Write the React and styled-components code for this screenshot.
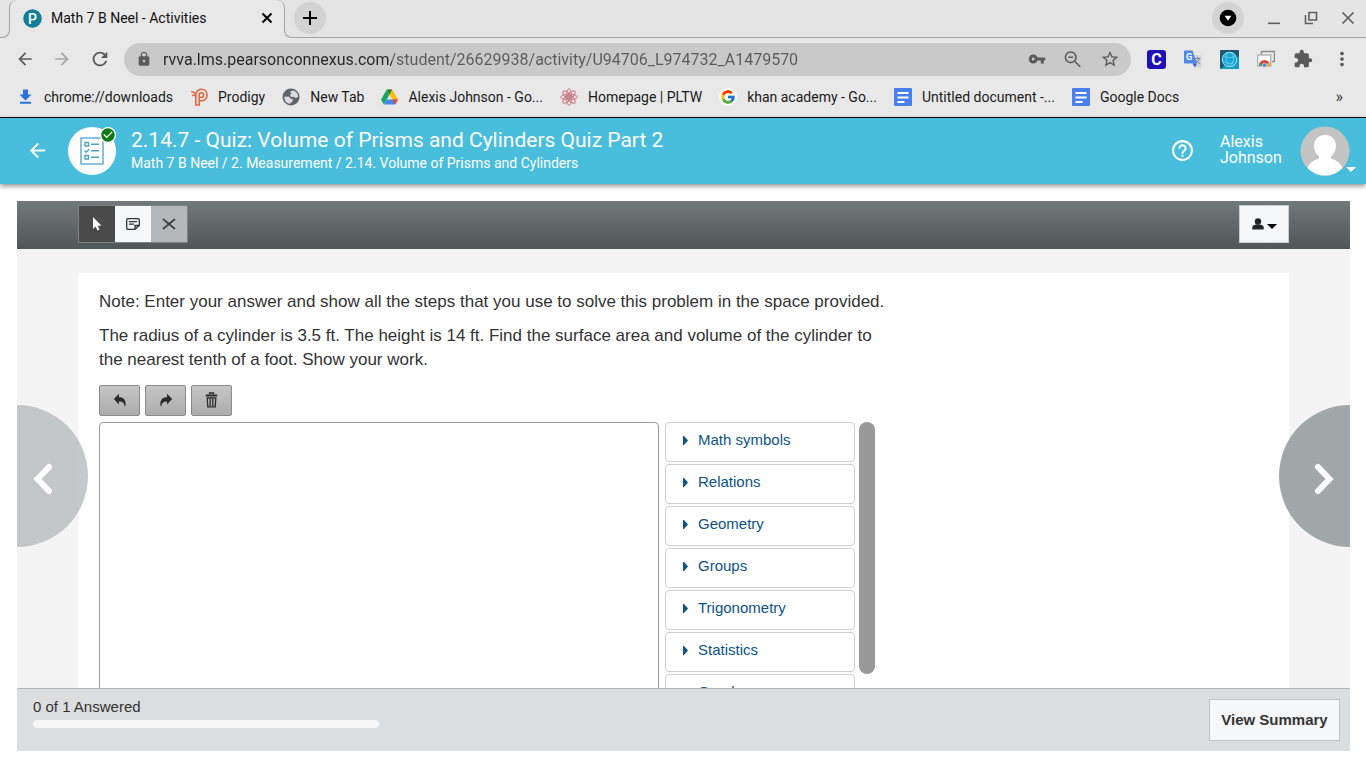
import { useState } from 'react';
import styled, { createGlobalStyle } from 'styled-components';
import {
  MdArrowBack,
  MdArrowForward,
  MdCheckCircle,
  MdExtension,
  MdHelpOutline,
  MdLock,
  MdMoreVert,
  MdRefresh,
  MdStarBorder,
  MdVpnKey,
} from 'react-icons/md';
import { FcGoogle } from 'react-icons/fc';

const GlobalStyle = createGlobalStyle`
  * {
    box-sizing: border-box;
  }

  body {
    margin: 0;
    background: #fff;
  }

  button {
    font-family: inherit;
    padding: 0;
    border: 0;
    background: none;
    color: inherit;
    cursor: pointer;
  }

  a {
    color: inherit;
    text-decoration: none;
  }

  svg {
    display: block;
    flex-shrink: 0;
  }
`;

const bookmarks = [
  { label: 'chrome://downloads', icon: <DownloadIcon /> },
  { label: 'Prodigy', icon: <ProdigyIcon /> },
  { label: 'New Tab', icon: <GlobeIcon /> },
  { label: 'Alexis Johnson - Go...', icon: <DriveIcon /> },
  { label: 'Homepage | PLTW', icon: <AtomIcon /> },
  { label: 'khan academy - Go...', icon: <GoogleIcon /> },
  { label: 'Untitled document -...', icon: <DocsIcon /> },
  { label: 'Google Docs', icon: <DocsIcon /> },
];

const categories = [
  'Math symbols',
  'Relations',
  'Geometry',
  'Groups',
  'Trigonometry',
  'Statistics',
  'Greek',
];

export default function App() {
  const [url, setUrl] = useState(
    'rvva.lms.pearsonconnexus.com/student/26629938/activity/U94706_L974732_A1479570'
  );
  const [answer, setAnswer] = useState('');
  const [openCategory, setOpenCategory] = useState(null);

  return (
    <Page>
      <GlobalStyle />
      <Browser>
        <TabStrip>
          <StripStart />
          <Tab>
            <PearsonIcon />
            <TabTitle>Math 7 B Neel - Activities</TabTitle>
            <TabClose aria-label="Close tab">
              <TabCloseIcon />
            </TabClose>
          </Tab>
          <StripRest>
            <RoundButton aria-label="New tab">
              <PlusIcon />
            </RoundButton>
            <WindowControls>
              <RoundButton aria-label="Search tabs">
                <TabSearchIcon />
              </RoundButton>
              <button aria-label="Minimize">
                <MinimizeIcon />
              </button>
              <button aria-label="Restore">
                <RestoreIcon />
              </button>
              <button aria-label="Close window">
                <CloseIcon />
              </button>
            </WindowControls>
          </StripRest>
        </TabStrip>

        <NavBar>
          <NavButtons>
            <button aria-label="Back">
              <MdArrowBack size={20} />
            </button>
            <FadedButton aria-label="Forward">
              <MdArrowForward size={20} />
            </FadedButton>
            <button aria-label="Reload">
              <MdRefresh size={22} />
            </button>
          </NavButtons>
          <AddressBar>
            <MdLock size={16} />
            <AddressInput
              type="text"
              aria-label="Address"
              spellCheck="false"
              value={url}
              onChange={(e) => setUrl(e.target.value)}
            />
            <AddressActions>
              <button aria-label="Saved passwords">
                <MdVpnKey size={18} />
              </button>
              <button aria-label="Zoom">
                <ZoomOutIcon />
              </button>
              <button aria-label="Bookmark this page">
                <MdStarBorder size={20} />
              </button>
            </AddressActions>
          </AddressBar>
          <Extensions>
            <CleverButton>C</CleverButton>
            <button aria-label="Translate">
              <TranslateIcon />
            </button>
            <button aria-label="World extension">
              <WorldIcon />
            </button>
            <button aria-label="Screen sharing">
              <CastIcon />
            </button>
            <button aria-label="Extensions">
              <MdExtension size={20} />
            </button>
            <button aria-label="Menu">
              <MdMoreVert size={22} />
            </button>
          </Extensions>
        </NavBar>

        <BookmarkBar>
          {bookmarks.map((bookmark) => (
            <Bookmark href="#" key={bookmark.label}>
              {bookmark.icon}
              {bookmark.label}
            </Bookmark>
          ))}
          <MoreBookmarks aria-label="More bookmarks">»</MoreBookmarks>
        </BookmarkBar>
      </Browser>

      <Header>
        <BackLink href="#" aria-label="Back to course">
          <MdArrowBack size={23} />
        </BackLink>
        <ActivityBadge>
          <ChecklistIcon />
          <DoneMark>
            <MdCheckCircle size={16} />
          </DoneMark>
        </ActivityBadge>
        <HeaderText>
          <Title>2.14.7 - Quiz: Volume of Prisms and Cylinders Quiz Part 2</Title>
          <Breadcrumb>
            Math 7 B Neel / 2. Measurement / 2.14. Volume of Prisms and Cylinders
          </Breadcrumb>
        </HeaderText>
        <button aria-label="Help">
          <MdHelpOutline size={25} />
        </button>
        <UserName>Alexis Johnson</UserName>
        <AccountButton aria-label="Account menu">
          <AvatarIcon />
          <Caret />
        </AccountButton>
      </Header>

      <Quiz>
        <ToolBar>
          <ToolGroup>
            <Tool $active aria-label="Pointer">
              <PointerIcon />
            </Tool>
            <Tool aria-label="Sticky note">
              <NoteIcon />
            </Tool>
            <Tool $muted aria-label="Eliminate choice">
              <CrossIcon />
            </Tool>
          </ToolGroup>
          <UserTool aria-label="User options">
            <PersonIcon />
            <Caret />
          </UserTool>
        </ToolBar>

        <Stage>
          <Card>
            <Instructions>
              <Paragraph>
                Note: Enter your answer and show all the steps that you use to
                solve this problem in the space provided.
              </Paragraph>
              <Paragraph>
                The radius of a cylinder is 3.5 ft. The height is 14 ft. Find
                the surface area and volume of the cylinder to the nearest tenth
                of a foot. Show your work.
              </Paragraph>
            </Instructions>
            <EditButtons>
              <EditButton aria-label="Undo">
                <UndoIcon />
              </EditButton>
              <EditButton aria-label="Redo">
                <UndoIcon flip />
              </EditButton>
              <EditButton aria-label="Clear" onClick={() => setAnswer('')}>
                <TrashIcon />
              </EditButton>
            </EditButtons>
            <Workspace>
              <Answer
                aria-label="Your answer"
                value={answer}
                onChange={(e) => setAnswer(e.target.value)}
              />
              <CategoryList>
                {categories.map((name) => (
                  <Category
                    key={name}
                    aria-expanded={openCategory === name}
                    onClick={() => setOpenCategory(name)}
                  >
                    <ArrowIcon />
                    {name}
                  </Category>
                ))}
              </CategoryList>
              <ScrollThumb />
            </Workspace>
          </Card>
        </Stage>

        <Footer>
          <Progress>
            <label htmlFor="answered">0 of 1 Answered</label>
            <ProgressBar id="answered" value="0" max="1" />
          </Progress>
          <SummaryButton>View Summary</SummaryButton>
        </Footer>

        <SideButton aria-label="Previous question">
          <ChevronIcon />
        </SideButton>
        <SideButton $right aria-label="Next question">
          <ChevronIcon flip />
        </SideButton>
      </Quiz>
    </Page>
  );
}

// Browser icons

function PearsonIcon() {
  return (
    <svg width="19" height="19" viewBox="0 0 19 19">
      <circle cx="9.5" cy="9.5" r="9.3" fill="#127f96" />
      <text
        x="5"
        y="14.5"
        fill="#fff"
        fontFamily="Roboto, sans-serif"
        fontSize="14"
        fontWeight="500"
      >
        P
      </text>
    </svg>
  );
}

function TabCloseIcon() {
  return (
    <svg width="16" height="16" viewBox="0 0 16 16">
      <path
        d="M3.500 3.500l9 9M12.500 3.500l-9 9"
        stroke="#000"
        strokeWidth="2"
      />
    </svg>
  );
}

function PlusIcon() {
  return (
    <svg width="14" height="14" viewBox="0 0 14 14">
      <path d="M7 0v14M0 7h14" stroke="#000" strokeWidth="2" />
    </svg>
  );
}

function TabSearchIcon() {
  return (
    <svg width="18" height="18" viewBox="0 0 18 18">
      <circle cx="9" cy="9" r="8.300" fill="#000" />
      <path d="M5.6 6.8h6.8L9 11.8z" fill="#fff" />
    </svg>
  );
}

function MinimizeIcon() {
  return (
    <svg width="14" height="14" viewBox="0 0 14 14">
      <path d="M1 12.3h12" stroke="#5f5f5f" strokeWidth="1.6" />
    </svg>
  );
}

function RestoreIcon() {
  return (
    <svg width="14" height="14" viewBox="0 0 14 14" fill="none">
      <path
        d="M5 1.5h7.5V9H5zM1.5 4v8.5H9"
        stroke="#5f5f5f"
        strokeWidth="1.6"
      />
    </svg>
  );
}

function CloseIcon() {
  return (
    <svg width="14" height="14" viewBox="0 0 14 14">
      <path
        d="M1.5 1.5l11 11M12.5 1.5l-11 11"
        stroke="#5f5f5f"
        strokeWidth="1.7"
      />
    </svg>
  );
}

function ZoomOutIcon() {
  return (
    <svg width="20" height="20" viewBox="0 0 20 20" fill="none">
      <path
        d="M13 8.300a5.300 5.300 0 1 1-10.600 0 5.300 5.300 0 0 1 10.600 0zM5.300 8.300h4.800M11.700 12.200l5.500 5.500"
        stroke="#5a5a5a"
        strokeWidth="1.600"
      />
    </svg>
  );
}

function DownloadIcon() {
  return (
    <svg width="17" height="17" viewBox="0 0 17 17" fill="#2a73d9">
      <path d="M6 1.5h5v5h3.500L8.500 12.500l-6-6H6zM3 13.700h11v2H3z" />
    </svg>
  );
}

function ProdigyIcon() {
  return (
    <svg width="18" height="18" viewBox="0 0 18 18" fill="none">
      <path
        d="M1.200 3.500c2 .2 3.500 1 4.500 2.800M2 7.500c1.800-.6 3.200-.2 3.800 1V17h3.400v-4.200M5.800 8.500C5.800 3.500 8 1.200 11.500 1.200c3.300 0 5.500 2.400 5.500 5.700 0 3.400-2.300 5.900-5.500 5.900H9.200V7.200c0-1.500.9-2.500 2.200-2.500s2.200.9 2.200 2.200-.9 2.300-2.200 2.300H9.500"
        stroke="#e0693f"
        strokeWidth="1.600"
      />
    </svg>
  );
}

function GlobeIcon() {
  return (
    <svg width="18" height="18" viewBox="0 0 18 18">
      <circle cx="9" cy="9" r="8.500" fill="#5f6368" />
      <path
        d="M2.500 8.500l4.500 .3 1.700 2 2.300.2-.5 2.200-2.500 2.600C4.500 15.500 2 12.500 2.500 8.500zM8 3.500l3.500-1c2.800 1 4.500 3 4.700 6l-2.200 1.800-2.500-1.500-2.500.2L8 6.700l1.500-1.200z"
        fill="#dcdcdc"
      />
    </svg>
  );
}

function DriveIcon() {
  return (
    <svg width="17" height="16" viewBox="0 0 17 16">
      <path d="M5.800.5L0 10.500l2.900 5 5.700-10z" fill="#1fa463" />
      <path d="M5.800.5h5.400L17 10.500h-5.700z" fill="#fbbc05" />
      <path d="M5.800.5h5.400L8.600 5.500z" fill="#188038" />
      <path d="M5.800 10.500H17l-2.900 5H2.900z" fill="#4285f4" />
      <path d="M11.300 10.500H17l-2.900 5z" fill="#ea4335" />
    </svg>
  );
}

function AtomIcon() {
  return (
    <svg width="18" height="18" viewBox="0 0 18 18" fill="none">
      <circle cx="9" cy="9" r="3" fill="#b98d92" />
      {[0, 45, 90, 135].map((angle) => (
        <ellipse
          key={angle}
          cx="9"
          cy="9"
          rx="8.300"
          ry="2.800"
          stroke="#cf7a86"
          strokeWidth="1"
          transform={`rotate(${angle} 9 9)`}
        />
      ))}
    </svg>
  );
}

function GoogleIcon() {
  return (
    <GoogleDisc>
      <FcGoogle size={16} />
    </GoogleDisc>
  );
}

function DocsIcon() {
  return (
    <svg width="18" height="18" viewBox="0 0 18 18">
      <rect width="18" height="18" rx="1" fill="#4a7fee" />
      <path
        d="M3.500 5h11M3.500 9.500h11M3.500 14h7"
        stroke="#fff"
        strokeWidth="2"
      />
    </svg>
  );
}

function TranslateIcon() {
  return (
    <svg width="18" height="18" viewBox="0 0 18 18">
      <path d="M8 5h8.500c.6 0 1 .4 1 1v10.500c0 .6-.4 1-1 1H12z" fill="#d3d6da" />
      <path
        d="M10.500 8.500h6M13.500 7v1.500M15.500 8.500c-.5 2-2 3.500-4 4.500M12 10c.8 1.500 2.200 2.800 4 3.500"
        stroke="#76808c"
        strokeWidth="1"
        fill="none"
      />
      <path d="M1 .5h7.500l4.300 13H1c-.6 0-1-.4-1-1v-11c0-.6.4-1 1-1z" fill="#4f89e8" />
      <path d="M8.500 13.500h4.300L11 17.500z" fill="#2f5fc0" />
      <text
        x="2"
        y="10"
        fill="#fff"
        fontFamily="Roboto, sans-serif"
        fontSize="9"
        fontWeight="700"
      >
        G
      </text>
    </svg>
  );
}

function WorldIcon() {
  return (
    <svg width="19" height="19" viewBox="0 0 18 18" fill="none">
      <rect width="18" height="18" rx="1" fill="#1c5a74" />
      <path d="M0 18h18V6z" fill="#169bc4" />
      <circle cx="9" cy="9" r="6.800" fill="#14a5d2" stroke="#8fe0f5" />
      <path
        d="M4 6c2 1.500 8 1.500 10 0M3 10c3 1.500 4 4 10 2M7 3c-2 4-1 9 2 12M11 3c3 3 2 8-1 12"
        stroke="#7fdcf3"
        strokeWidth=".7"
      />
    </svg>
  );
}

function CastIcon() {
  return (
    <svg width="18" height="18" viewBox="0 0 18 18" fill="none">
      <path d="M4.500 4.500v-3h13v10H15" stroke="#8a8a8a" strokeWidth="1.400" />
      <rect x=".8" y="5" width="13" height="11" fill="#fff" stroke="#999" />
      <path d="M3.500 15.500a4 4 0 0 1 8 0" stroke="#db4437" strokeWidth="3" />
      <path d="M3.500 15.500a4 4 0 0 1 .7-2.200" stroke="#3c9c5a" strokeWidth="3" />
      <path d="M11.500 15.500a4 4 0 0 0-.7-2.200" stroke="#f4b400" strokeWidth="3" />
      <circle cx="7.500" cy="15" r="1.800" fill="#4285f4" />
    </svg>
  );
}

// Header icons

function ChecklistIcon() {
  return (
    <svg width="24" height="28" viewBox="0 0 24 28" fill="none">
      <rect
        x="1"
        y="1"
        width="22"
        height="26"
        stroke="#67aed6"
        strokeWidth="1.500"
      />
      <path
        d="M5 5.500h3.500V9H5zM5 18.500h3.500V22H5zM4.500 13.500l1.700 1.700 3-3M11 7.200h8M11 13.800h8M11 20.200h8"
        stroke="#4d9fcc"
        strokeWidth="1.400"
      />
    </svg>
  );
}

function AvatarIcon() {
  return (
    <svg width="50" height="50" viewBox="0 0 50 50">
      <clipPath id="avatar">
        <circle cx="25" cy="25" r="24.500" />
      </clipPath>
      <g clipPath="url(#avatar)">
        <rect width="50" height="50" fill="#c4c4c4" />
        <path
          d="M25 9c6.500 0 11 4.600 11 11 0 4.500-2.200 8-5 10.300v2.200c5 1.500 9.500 4.500 11.500 9V50H7.500v-8.500c2-4.500 6.500-7.500 11.500-9v-2.200c-2.800-2.300-5-5.800-5-10.300C14 13.600 18.500 9 25 9z"
          fill="#fff"
        />
      </g>
    </svg>
  );
}

function Caret() {
  return (
    <svg width="10" height="5" viewBox="0 0 10 5">
      <path d="M0 0h10L5 5z" fill="currentColor" />
    </svg>
  );
}

// Quiz icons

function PointerIcon() {
  return (
    <svg width="12" height="16" viewBox="0 0 12 16">
      <path d="M2 1v12l2.700-2.500L6.500 14.500l2-.9-1.800-3.900H10.500z" fill="#fff" />
    </svg>
  );
}

function NoteIcon() {
  return (
    <svg width="14" height="12" viewBox="0 0 14 12" fill="none">
      <path
        d="M9 11.300H2c-.8 0-1.300-.5-1.300-1.300V2C.7 1.200 1.200.7 2 .7h10c.8 0 1.300.5 1.300 1.300v5.500zM9 11.300V7.500h4.300M3 3.700h8M3 6.200h5"
        stroke="#2f3335"
        strokeWidth="1.300"
      />
    </svg>
  );
}

function CrossIcon() {
  return (
    <svg width="14" height="12" viewBox="0 0 14 12">
      <path d="M1 1l12 10M13 1L1 11" stroke="#3d4042" strokeWidth="1.700" />
    </svg>
  );
}

function PersonIcon() {
  return (
    <svg width="12" height="12" viewBox="0 0 12 12" fill="#232628">
      <circle cx="6" cy="3.500" r="3.200" />
      <path d="M.3 11.500V9.300C.3 7.600 1.700 6.800 4 6.400h4c2.300.4 3.700 1.200 3.700 2.900v2.200z" />
    </svg>
  );
}

function UndoIcon({ flip }) {
  return (
    <svg width="14" height="14" viewBox="0 0 14 14" fill="#2b2b2b">
      <path
        d="M6 .8v3.400c4.500 0 7 2.300 6.600 8.600l-1 .4C11.200 9.800 9.500 8.400 6 8.400v3L.8 6z"
        transform={flip ? 'matrix(-1 0 0 1 14 0)' : undefined}
      />
    </svg>
  );
}

function TrashIcon() {
  return (
    <svg width="13" height="16" viewBox="0 0 13 16" fill="none">
      <path
        d="M4.500 2.500V1h4v1.500M2.200 6l.6 8.800h7.400L10.800 6zM5.200 7v7M7.800 7v7"
        stroke="#2b2b2b"
        strokeWidth="1.300"
      />
      <path d="M.8 2.500h11.400v2H.8z" fill="#2b2b2b" />
    </svg>
  );
}

function ArrowIcon() {
  return (
    <svg width="5" height="9" viewBox="0 0 5 9">
      <path d="M0 0h1l4 4.500L1 9H0z" fill="#0d5385" />
    </svg>
  );
}

function ChevronIcon({ flip }) {
  return (
    <svg width="20" height="32" viewBox="0 0 20 32" fill="none">
      <path
        d="M16 4L4.500 16 16 28"
        stroke="#fff"
        strokeWidth="6"
        strokeLinecap="round"
        transform={flip ? 'matrix(-1 0 0 1 20 0)' : undefined}
      />
    </svg>
  );
}

// Page

const Page = styled.div`
  display: flex;
  flex-direction: column;
  height: 100vh;
  overflow: hidden;
  font-family: Roboto, sans-serif;
`;

// Browser

const Browser = styled.div`
  background: #e8e8e8;
  border-bottom: 1px solid #000;
  color: #5a5a5a;
`;

const TabStrip = styled.div`
  display: flex;
  height: 38px;
  background: #e4e4e4;
`;

const StripStart = styled.div`
  width: 10px;
  margin-top: 8px;
  border: 1px solid #a2a2a2;
  border-width: 0 1px 1px 0;
  border-bottom-right-radius: 8px;
`;

const Tab = styled.div`
  position: relative;
  width: 274px;
  display: flex;
  align-items: center;
  padding: 0 9px 2px 13px;
  background: #e8e8e8;
  border-radius: 8px 8px 0 0;
  color: #111;

  /* rounded shoulders that carry the side lines up to the window edge */
  &::before {
    content: '';
    position: absolute;
    top: 0;
    left: -1px;
    right: -1px;
    height: 8px;
    border: 1px solid #a2a2a2;
    border-width: 0 1px;
    border-radius: 8px 8px 0 0;
  }
`;

const TabTitle = styled.span`
  flex: 1;
  font-size: 14px;
  margin-left: 9px;
`;

const TabClose = styled.button`
  color: #000;
`;

const StripRest = styled.div`
  flex: 1;
  display: flex;
  align-items: center;
  margin-top: 8px;
  padding: 0 11px 10px 9px;
  border: 1px solid #a2a2a2;
  border-width: 0 0 1px 1px;
  border-bottom-left-radius: 8px;
`;

const RoundButton = styled.button`
  width: 32px;
  height: 32px;
  display: flex;
  align-items: center;
  justify-content: center;
  border-radius: 50%;
  background: #d2d2d2;
`;

const WindowControls = styled.div`
  margin-left: auto;
  display: flex;
  align-items: center;
  gap: 23px;
`;

const NavBar = styled.div`
  display: flex;
  align-items: center;
  height: 42px;
  padding: 0 13px 0 15px;
`;

const NavButtons = styled.div`
  display: flex;
  align-items: center;
  gap: 17px;
  margin-right: 13px;
`;

const FadedButton = styled.button`
  color: #a5a5a5;
`;

const AddressBar = styled.div`
  flex: 1;
  display: flex;
  align-items: center;
  height: 33px;
  padding: 0 11px 0 12px;
  border-radius: 17px;
  background: #c9c9c9;
`;

// The host part of the address is darker than the rest of it
const AddressInput = styled.input`
  flex: 1;
  border: 0;
  padding: 0;
  margin-left: 11px;
  outline: 0;
  font-family: inherit;
  font-size: 16px;
  color: #4f4f4f;
  background: linear-gradient(90deg, #262626 229px, #5a5a5a 229px);
  background-clip: text;
  -webkit-text-fill-color: transparent;
`;

const AddressActions = styled.div`
  display: flex;
  align-items: center;
  gap: 17px;
`;

const Extensions = styled.div`
  display: flex;
  align-items: center;
  gap: 18px;
  margin-left: 16px;
`;

const CleverButton = styled.button`
  width: 19px;
  height: 19px;
  border-radius: 3px;
  background: #1c10b8;
  color: #fff;
  font-size: 16px;
  line-height: 19px;
  font-weight: bold;
`;

const BookmarkBar = styled.div`
  display: flex;
  align-items: center;
  gap: 17px;
  height: 37px;
  padding: 0 23px 4px 17px;
`;

const Bookmark = styled.a`
  display: flex;
  align-items: center;
  gap: 10px;
  font-size: 14px;
  white-space: nowrap;
  color: #1a1a1a;
`;

const GoogleDisc = styled.span`
  padding: 1px;
  border-radius: 50%;
  background: #fff;
`;

const MoreBookmarks = styled.button`
  margin-left: auto;
  font-size: 16px;
  color: #333;
`;

// Header

const Header = styled.header`
  display: flex;
  align-items: center;
  height: 66px;
  padding: 0 10px 1px 26px;
  background: #49bddc;
  color: #fff;
  box-shadow: 0 2px 5px rgba(0, 0, 0, 0.45);
`;

const BackLink = styled.a`
  margin-right: 19px;
`;

const ActivityBadge = styled.div`
  position: relative;
  width: 48px;
  height: 48px;
  display: flex;
  align-items: center;
  justify-content: center;
  border-radius: 50%;
  background: #fff;
`;

const DoneMark = styled.span`
  position: absolute;
  top: 0;
  right: 0;
  border-radius: 50%;
  background: #fff;
  color: #0a7a12;
`;

const HeaderText = styled.div`
  flex: 1;
  margin-left: 15px;
`;

const Title = styled.h1`
  margin: 0;
  font-size: 21px;
  line-height: 25px;
  font-weight: normal;
`;

const Breadcrumb = styled.p`
  margin: 0;
  font-size: 14px;
  line-height: 20px;
`;

const UserName = styled.span`
  width: 66px;
  margin: 0 14px 0 25px;
  padding-bottom: 2px;
  font-size: 16px;
  line-height: 16px;
`;

const AccountButton = styled.button`
  display: flex;
  align-items: flex-end;

  svg + svg {
    margin: 0 0 4px -4px;
  }
`;

// Quiz

const Quiz = styled.main`
  position: relative;
  flex: 1;
  min-height: 0;
  display: flex;
  flex-direction: column;
  margin: 17px 16px 17px 17px;
  font-family: 'Liberation Sans', Arial, sans-serif;
  color: #333;
`;

const ToolBar = styled.div`
  display: flex;
  align-items: center;
  justify-content: space-between;
  height: 48px;
  padding: 0 61px 2px;
  background: linear-gradient(#73787a, #505757);
`;

const ToolGroup = styled.div`
  display: flex;
  border: 1px solid #7d8283;
`;

const Tool = styled.button`
  width: 36px;
  height: 36px;
  display: flex;
  align-items: center;
  justify-content: center;
  background: ${(props) =>
    props.$active ? '#4a4a4a' : props.$muted ? '#b5b8ba' : '#f5f7f9'};
`;

const UserTool = styled.button`
  width: 50px;
  height: 38px;
  display: flex;
  align-items: center;
  justify-content: center;
  gap: 3px;
  border: 1px solid #c8ced2;
  background: #f5f7f9;
  color: #000;

  svg + svg {
    margin-top: 4px;
  }
`;

const Stage = styled.div`
  flex: 1;
  min-height: 0;
  padding: 24px 61px 0;
  overflow: hidden;
  background: #f4f4f4;
`;

const Card = styled.section`
  padding: 17px 21px;
  border-radius: 3px;
  background: #fff;
`;

const Instructions = styled.div`
  max-width: 790px;
`;

const Paragraph = styled.p`
  margin: 0 0 10px;
  font-size: 17px;
  line-height: 24px;
`;

const EditButtons = styled.div`
  display: flex;
  gap: 5px;
  margin: 13px 0 6px;
`;

const EditButton = styled.button`
  width: 41px;
  height: 31px;
  display: flex;
  align-items: center;
  justify-content: center;
  padding-bottom: 2px;
  border: 1px solid #8a8a8a;
  border-radius: 2px;
  background: linear-gradient(#c6c6c6, #acacac);
`;

const Workspace = styled.div`
  display: flex;
  align-items: flex-start;
  max-width: 776px;
`;

const Answer = styled.textarea`
  flex: 1;
  height: 320px;
  padding: 10px;
  border: 1px solid #999;
  border-radius: 4px;
  resize: none;
  font: inherit;
`;

const CategoryList = styled.div`
  width: 190px;
  display: flex;
  flex-direction: column;
  gap: 2px;
  margin: 0 4px 0 6px;
`;

const Category = styled.button`
  display: flex;
  align-items: center;
  gap: 10px;
  height: 40px;
  padding: 0 17px 4px;
  border: 1px solid #d0d0d0;
  border-radius: 4px;
  font-size: 15px;
  line-height: 18px;
  color: #0d5385;
`;

const ScrollThumb = styled.div`
  width: 16px;
  height: 252px;
  border-radius: 8px;
  background: #999;
`;

// Footer

const Footer = styled.footer`
  display: flex;
  align-items: center;
  justify-content: space-between;
  height: 63px;
  padding: 0 10px 0 16px;
  border-top: 1px solid #b2b4b6;
  background: #dcddde;
`;

const Progress = styled.div`
  display: flex;
  flex-direction: column;
  gap: 4px;
  margin-bottom: 14px;
  font-size: 15px;
  line-height: 18px;
`;

const ProgressBar = styled.progress`
  appearance: none;
  width: 346px;
  height: 8px;

  &::-webkit-progress-bar {
    border-radius: 4px;
    background: #f7f7f7;
  }

  &::-webkit-progress-value {
    border-radius: 4px;
    background: #49bddc;
  }
`;

const SummaryButton = styled.button`
  height: 42px;
  width: 131px;
  padding-bottom: 1px;
  border: 1px solid #c0c4c7;
  background: #f5f7f9;
  font-size: 15px;
  font-weight: bold;
`;

// The half circles lie over the question on both sides
const SideButton = styled.button`
  position: absolute;
  top: 50%;
  ${(props) => (props.$right ? 'right: 0;' : 'left: 0;')}
  transform: translateY(-50%);
  width: 71px;
  height: 142px;
  display: flex;
  align-items: center;
  justify-content: ${(props) => (props.$right ? 'flex-end' : 'flex-start')};
  padding: 6px 16px 0;
  border-radius: ${(props) =>
    props.$right ? '71px 0 0 71px' : '0 71px 71px 0'};
  background: ${(props) =>
    props.$right ? 'rgba(154, 159, 159, 0.93)' : 'rgba(184, 187, 188, 0.8)'};
`;
